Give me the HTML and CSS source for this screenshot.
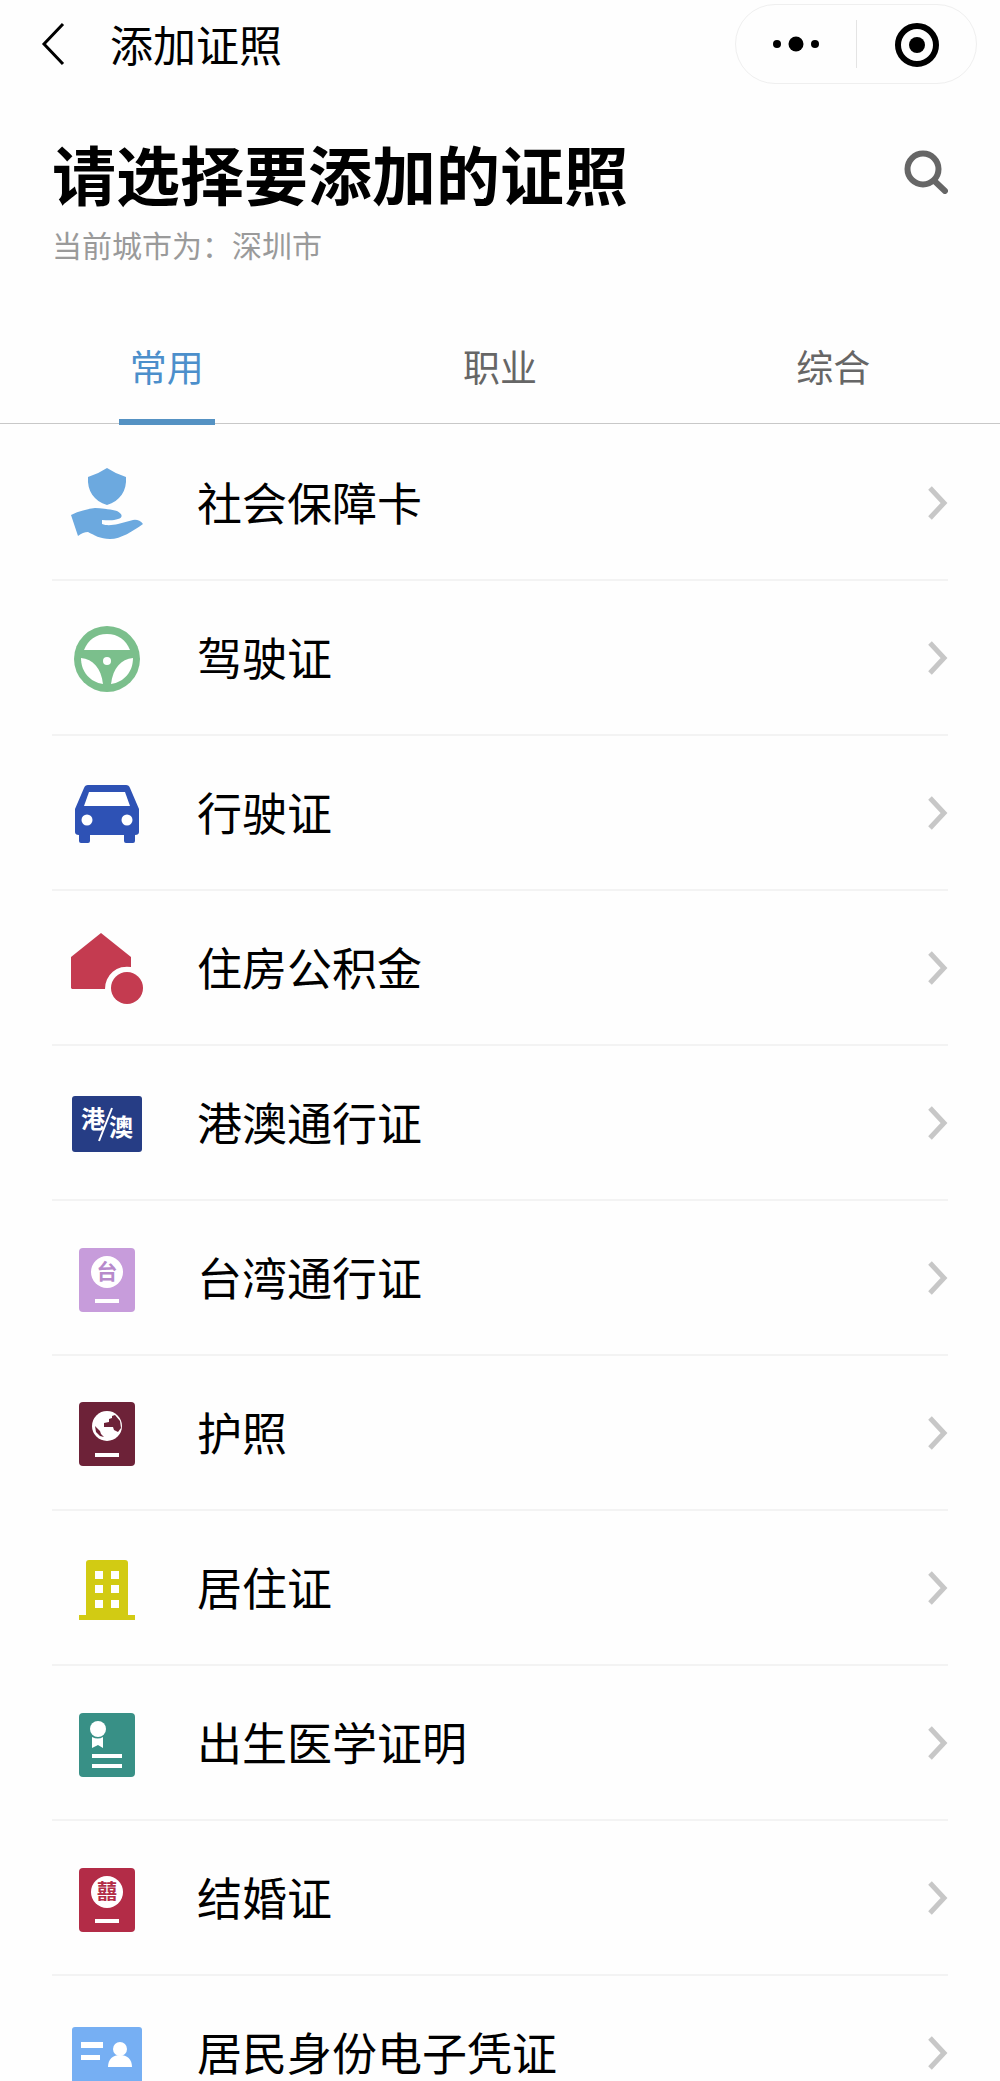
FILE: index.html
```html
<!DOCTYPE html>
<html lang="zh-CN">
<head>
  <meta charset="UTF-8">
  <meta name="viewport" content="width=device-width, initial-scale=1.0">
  <title>添加证照</title>
  <link rel="stylesheet" href="styles.css">
</head>
<body>
  <header class="navbar">
    <button type="button" class="back" aria-label="返回">
      <svg width="24" height="44" viewBox="0 0 24 44"><path d="M22 2 L3 22 L22 42" fill="none" stroke="#000" stroke-width="3"/></svg>
    </button>
    <span class="navbar-title">添加证照</span>
    <div class="capsule">
      <button type="button" aria-label="更多">
        <svg width="48" height="48" viewBox="0 0 48 48"><circle cx="5" cy="24" r="4"/><circle cx="24" cy="24" r="7.5"/><circle cx="43" cy="24" r="4"/></svg>
      </button>
      <button type="button" aria-label="关闭">
        <svg width="48" height="48" viewBox="0 0 48 48"><circle cx="25" cy="25" r="19" fill="none" stroke="#000" stroke-width="6"/><circle cx="25" cy="25" r="8"/></svg>
      </button>
    </div>
  </header>

  <section class="heading">
    <div>
      <h1>请选择要添加的证照</h1>
      <p>当前城市为：深圳市</p>
    </div>
    <button type="button" class="search" aria-label="搜索">
      <svg width="44" height="44" viewBox="0 0 44 44" fill="none" stroke="#666" stroke-linecap="round"><circle cx="19" cy="19" r="15.5" stroke-width="6"/><path d="M30.5 31 L41 41" stroke-width="6"/></svg>
    </button>
  </section>

  <nav class="tabs">
    <button type="button" class="tab active">常用</button>
    <button type="button" class="tab">职业</button>
    <button type="button" class="tab">综合</button>
  </nav>

  <main class="list">
    <ul>
      <li><a href="#">
        <svg class="icon" viewBox="0 0 72 72" fill="#6ca9df"><path d="M36 1 Q45 7 55 10 C56 24 49 34 36 38 C23 34 16 24 17 10 Q27 7 36 1Z"/><path d="M0 48 C8 44 16 42 24 41 C33 41 41 43 46 44 C52 47 52 51 47 52 C42 54 36 53 31 53 L31 57 C36 59 42 58 47 57 L62 53 Q68 52 72 57 C62 64 50 72 39 72 C29 72 23 68 17 65 Q12 65 7 69Z"/></svg>
        <span>社会保障卡</span>
        <svg class="arrow" viewBox="0 0 20 34"><path d="M2 2 L16 17 L2 32"/></svg>
      </a></li>
      <li><a href="#">
        <svg class="icon" viewBox="0 0 72 72"><circle cx="36" cy="37" r="33" fill="#7bbf8c"/><g fill="#fff"><path d="M13 28 C17 18 25 12 36 12 C47 12 55 18 59 28Z"/><path d="M10 36 C22 37 30 46 32 62 C19 60 10 50 10 36Z"/><path d="M62 36 C50 37 42 46 40 62 C53 60 62 50 62 36Z"/><circle cx="36" cy="39" r="4"/></g></svg>
        <span>驾驶证</span>
        <svg class="arrow" viewBox="0 0 20 34"><path d="M2 2 L16 17 L2 32"/></svg>
      </a></li>
      <li><a href="#">
        <svg class="icon" viewBox="0 0 72 72"><path d="M17 8 H55 Q58 8 59 11 L68 32 V55 Q68 58 64 58 V64 Q64 66 62 66 H55 Q53 66 53 64 V58 H19 V64 Q19 66 17 66 H10 Q8 66 8 64 V58 Q4 58 4 55 V32 L13 11 Q14 8 17 8Z" fill="#2e52b5"/><g fill="#fff"><path d="M18 15 H54 L59 29 H13Z"/><circle cx="16" cy="43" r="5.5"/><circle cx="56" cy="43" r="5.5"/></g></svg>
        <span>行驶证</span>
        <svg class="arrow" viewBox="0 0 20 34"><path d="M2 2 L16 17 L2 32"/></svg>
      </a></li>
      <li><a href="#">
        <svg class="icon" viewBox="0 0 72 72" fill="#c43b50"><path d="M30 1 L60 25 V35 A22 22 0 0 0 34 57 H1 L0 56 V25Z"/><circle cx="56" cy="56" r="16"/></svg>
        <span>住房公积金</span>
        <svg class="arrow" viewBox="0 0 20 34"><path d="M2 2 L16 17 L2 32"/></svg>
      </a></li>
      <li><a href="#">
        <svg class="icon" viewBox="0 0 72 72"><rect x="1" y="9" width="70" height="56" rx="3" fill="#263d85"/><g fill="#fff"><text x="22" y="41" font-size="24">港</text><text x="50" y="49" font-size="24">澳</text></g><path d="M41 21 L28 54" stroke="#fff" stroke-width="2"/></svg>
        <span>港澳通行证</span>
        <svg class="arrow" viewBox="0 0 20 34"><path d="M2 2 L16 17 L2 32"/></svg>
      </a></li>
      <li><a href="#">
        <svg class="icon" viewBox="0 0 72 72"><rect x="8" y="6" width="56" height="64" rx="4" fill="#c79cdb"/><circle cx="36" cy="30" r="16" fill="#fff"/><text x="36" y="37" font-size="21" fill="#b78acb">台</text><path d="M24 57 H48 V61 H24Z" fill="#fff"/></svg>
        <span>台湾通行证</span>
        <svg class="arrow" viewBox="0 0 20 34"><path d="M2 2 L16 17 L2 32"/></svg>
      </a></li>
      <li><a href="#">
        <svg class="icon" viewBox="0 0 72 72" fill="#6d2238"><rect x="8" y="5" width="56" height="64" rx="4"/><circle cx="36" cy="29" r="15" fill="#fff"/><path d="M33 26 L38 25 V22 L41 21 V19 L44 18 L49 24 L50 31 L47 35 L43 33 L42 30 H33Z"/><path d="M24 29 L29 34 L30 37 L33 40 L29 39 L25 35Z"/><path d="M24 56 H48 V60 H24Z" fill="#fff"/></svg>
        <span>护照</span>
        <svg class="arrow" viewBox="0 0 20 34"><path d="M2 2 L16 17 L2 32"/></svg>
      </a></li>
      <li><a href="#">
        <svg class="icon" viewBox="0 0 72 72"><path d="M18 8 H54 Q57 8 57 11 V63 H64 V68 H8 V63 H15 V11 Q15 8 18 8Z" fill="#d2cb13"/><path d="M24 19h8v8h-8z M40 19h8v8h-8z M24 33h8v8h-8z M40 33h8v8h-8z M24 48h8v8h-8z M40 48h8v8h-8z" fill="#fff"/></svg>
        <span>居住证</span>
        <svg class="arrow" viewBox="0 0 20 34"><path d="M2 2 L16 17 L2 32"/></svg>
      </a></li>
      <li><a href="#">
        <svg class="icon" viewBox="0 0 72 72"><rect x="8" y="6" width="56" height="64" rx="4" fill="#389086"/><g fill="#fff"><circle cx="27" cy="22" r="8"/><path d="M21 30 Q27 33 32 30 V41 L27 38 L21 41Z"/><path d="M21 47 H51 V51 H21Z M21 57 H51 V61 H21Z"/></g></svg>
        <span>出生医学证明</span>
        <svg class="arrow" viewBox="0 0 20 34"><path d="M2 2 L16 17 L2 32"/></svg>
      </a></li>
      <li><a href="#">
        <svg class="icon" viewBox="0 0 72 72"><rect x="8" y="6" width="56" height="64" rx="4" fill="#b32c47"/><circle cx="36" cy="30" r="16" fill="#fff"/><text x="36" y="37" font-size="20" fill="#b32c47">囍</text><path d="M24 57 H48 V61 H24Z" fill="#fff"/></svg>
        <span>结婚证</span>
        <svg class="arrow" viewBox="0 0 20 34"><path d="M2 2 L16 17 L2 32"/></svg>
      </a></li>
      <li><a href="#">
        <svg class="icon" viewBox="0 0 72 72"><rect x="1" y="10" width="70" height="56" rx="3" fill="#76aff3"/><g fill="#fff"><path d="M10 25 H32 V31 H10Z M10 38 H29 V43 H10Z"/><circle cx="49" cy="32" r="7"/><path d="M37 50 C37 42 42 38 49 38 C56 38 61 42 61 50Z"/></g></svg>
        <span>居民身份电子凭证</span>
        <svg class="arrow" viewBox="0 0 20 34"><path d="M2 2 L16 17 L2 32"/></svg>
      </a></li>
    </ul>
  </main>
</body>
</html>
```
FILE: styles.css
```css
* {
  box-sizing: border-box;
}
body {
  display: flex;
  flex-direction: column;
  height: 100vh;
  margin: 0;
  background: #fefefe;
  color: #000;
  font-family: "Noto Sans CJK SC", sans-serif;
}
button {
  padding: 0;
  border: none;
  background: none;
  font-family: inherit;
  cursor: pointer;
}
svg {
  display: block;
  flex-shrink: 0;
}
h1, p, ul {
  margin: 0;
  padding: 0;
}

.navbar {
  display: flex;
  align-items: center;
  flex-shrink: 0;
  height: 88px;
  padding: 0 23px 0 41px;
}
.navbar-title {
  flex: 1;
  margin-left: 45px;
  padding-bottom: 2px;
  font-size: 43px;
  line-height: 60px;
}
.capsule {
  display: flex;
  align-items: center;
  width: 242px;
  height: 80px;
  border: 1px solid #efefef;
  border-radius: 40px;
}
.capsule button {
  display: flex;
  flex: 1;
  justify-content: center;
  align-items: center;
  height: 48px;
}
.capsule button + button {
  border-left: 1px solid #e4e4e4;
}

.heading {
  display: flex;
  justify-content: space-between;
  align-items: flex-start;
  flex-shrink: 0;
  padding: 42px 52px 0 52px;
}
.heading h1 {
  font-size: 64px;
  font-weight: bold;
  line-height: 84px;
}
.heading p {
  margin-top: 8px;
  color: #9a9a9a;
  font-size: 30px;
  line-height: 44px;
}
.search {
  margin-top: 20px;
}

.tabs {
  display: flex;
  flex-shrink: 0;
  margin-top: 44px;
  border-bottom: 1px solid #c8c8c8;
}
.tab {
  position: relative;
  flex: 1;
  height: 113px;
  padding-bottom: 2px;
  color: #666;
  font-size: 37px;
  line-height: 56px;
}
.tab.active {
  color: #4c8fcb;
}
.tab.active::after {
  content: "";
  position: absolute;
  left: 50%;
  bottom: -2px;
  width: 96px;
  height: 6px;
  margin-left: -48px;
  background: #5592c3;
}

.list {
  flex: 1;
  min-height: 0;
  padding: 2px 52px 0;
  overflow-y: auto;
  scrollbar-width: none;
}
.list ul {
  list-style: none;
}
.list li {
  border-bottom: 2px solid #f3f3f3;
}
.list a {
  display: flex;
  align-items: center;
  height: 153px;
  padding-left: 19px;
  color: #000;
  font-size: 45px;
  line-height: 64px;
  text-decoration: none;
}
.list span {
  flex: 1;
  margin-left: 54px;
  padding-bottom: 2px;
}
.icon {
  width: 72px;
  height: 72px;
}
.icon text {
  font-weight: bold;
  text-anchor: middle;
}
.arrow {
  width: 20px;
  height: 34px;
  fill: none;
  stroke: #c7c7c7;
  stroke-width: 5;
}
```
